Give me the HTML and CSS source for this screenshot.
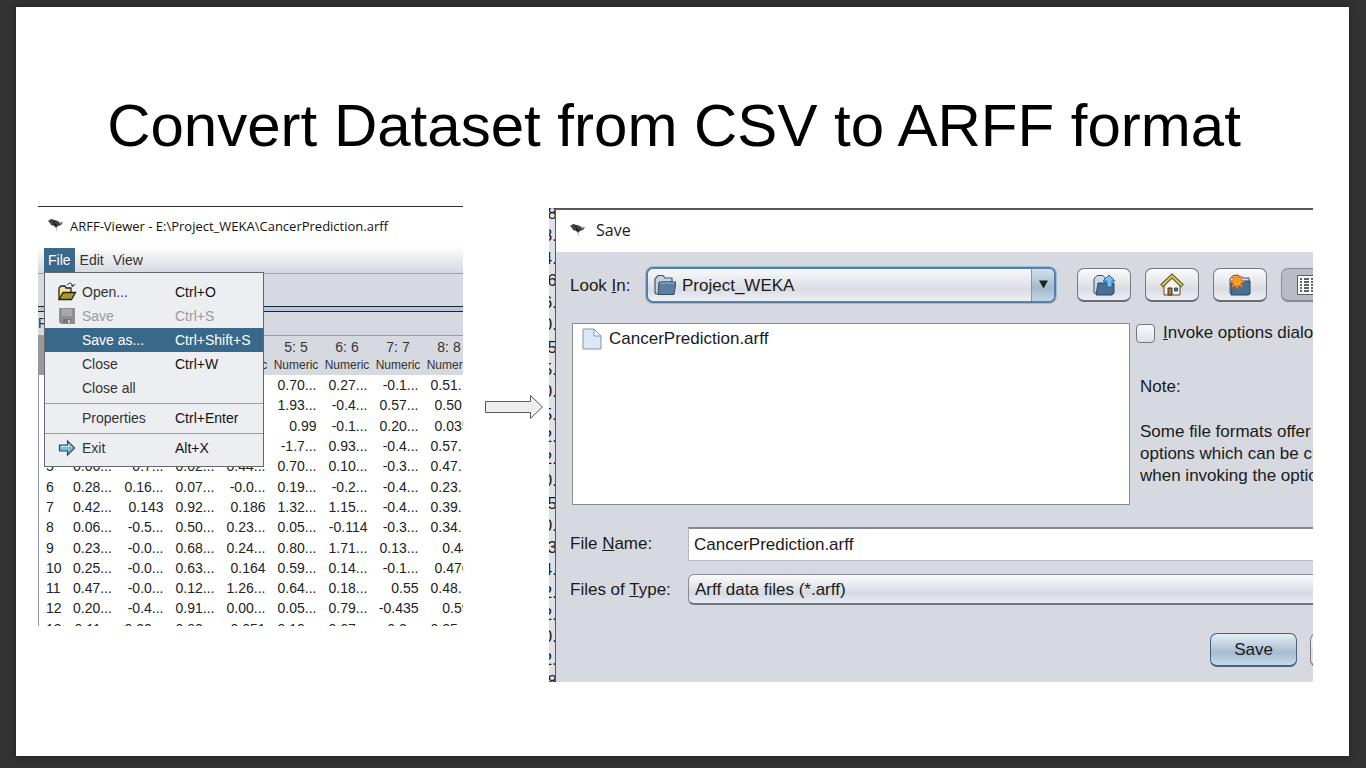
FILE: index.html
```html
<!DOCTYPE html>
<html lang="en">
<head>
<meta charset="utf-8">
<title>Convert Dataset from CSV to ARFF format</title>
<link rel="stylesheet" href="styles.css">
</head>
<body>
<main class="slide">
  <h1 class="slide-title">Convert Dataset from CSV to ARFF format</h1>
  <div class="figures">

    <section class="viewer">
      <header class="viewer-title">
        <svg class="bird" viewBox="0 0 20 15" aria-hidden="true"><path d="M2 3 5 1l4 1 3 1 2 2 3-1-2 3-3 1-2 2-2-2-3-1-1-2z" fill="#444"/><path d="M5 2 9 4 8 7 12 8z" fill="#111"/><path d="M13 4h4l-3 2z" fill="#999"/><path d="M10 10l1 3" fill="none" stroke="#bbb"/></svg>
        <span>ARFF-Viewer - E:\Project_WEKA\CancerPrediction.arff</span>
      </header>
      <nav class="menubar">
        <button class="menubar-item is-open" type="button">File</button>
        <button class="menubar-item" type="button">Edit</button>
        <button class="menubar-item" type="button">View</button>
        <ul class="menu">
          <li><button class="menu-item" type="button">
            <svg class="menu-icon" viewBox="0 0 20 20" aria-hidden="true"><path d="M2 17V6l2-2h4l1 2h5v4" fill="#f4e98c" stroke="#222" stroke-width="1.3"/><path d="M2 17.500 6 10.500h12.500l-4 7z" fill="#a89a20" stroke="#222" stroke-width="1.300"/><path d="M10 3c2-3 5-2 6 1m-2-1 2 1.500L18 2" fill="none" stroke="#222"/></svg>
            <span>Open...</span><kbd>Ctrl+O</kbd></button></li>
          <li><button class="menu-item" type="button" disabled>
            <svg class="menu-icon" viewBox="0 0 20 20" aria-hidden="true"><path d="M2 2h16v16H4l-2-2z" fill="#8f8f8f"/><path d="M5 3h10v7H5z" fill="#a9a9a9"/><path d="M6 13h8v4H6z" fill="#777"/><path d="M11 14h2v3h-2z" fill="#ccc"/></svg>
            <span>Save</span><kbd>Ctrl+S</kbd></button></li>
          <li><button class="menu-item is-active" type="button"><i></i><span>Save as...</span><kbd>Ctrl+Shift+S</kbd></button></li>
          <li><button class="menu-item" type="button"><i></i><span>Close</span><kbd>Ctrl+W</kbd></button></li>
          <li><button class="menu-item" type="button"><i></i><span>Close all</span></button></li>
          <li class="menu-line"></li>
          <li><button class="menu-item" type="button"><i></i><span>Properties</span><kbd>Ctrl+Enter</kbd></button></li>
          <li class="menu-line"></li>
          <li><button class="menu-item" type="button">
            <svg class="menu-icon" viewBox="0 0 20 20" aria-hidden="true"><path d="M2.500 7h8V3l7 7-7 7v-4h-8z" fill="#79bfd2" stroke="#2c4b58" stroke-width="1.200"/><path d="M4 8.500h8V6.500l3 3" fill="none" stroke="#c8ecf4"/></svg>
            <span>Exit</span><kbd>Alt+X</kbd></button></li>
        </ul>
      </nav>
      <div class="viewer-tabs"></div>
      <div class="viewer-split"></div>
      <div class="viewer-relation">R</div>
      <table class="data">
        <thead>
          <tr><th></th><th></th><th></th><th></th><th>&nbsp;<small>Numeric</small></th><th>5: 5<small>Numeric</small></th><th>6: 6<small>Numeric</small></th><th>7: 7<small>Numeric</small></th><th>8: 8<small>Numeric</small></th></tr>
        </thead>
        <tbody>
          <tr><td></td><td></td><td></td><td></td><td></td><td>0.70...</td><td>0.27...</td><td>-0.1...</td><td>0.51...</td></tr>
          <tr><td></td><td></td><td></td><td></td><td></td><td>1.93...</td><td>-0.4...</td><td>0.57...</td><td>0.501</td></tr>
          <tr><td></td><td></td><td></td><td></td><td></td><td>0.99</td><td>-0.1...</td><td>0.20...</td><td>0.035</td></tr>
          <tr><td></td><td></td><td></td><td></td><td></td><td>-1.7...</td><td>0.93...</td><td>-0.4...</td><td>0.57...</td></tr>
          <tr><td>5</td><td>0.06...</td><td>0.7...</td><td>0.02...</td><td>0.44...</td><td>0.70...</td><td>0.10...</td><td>-0.3...</td><td>0.47...</td></tr>
          <tr><td>6</td><td>0.28...</td><td>0.16...</td><td>0.07...</td><td>-0.0...</td><td>0.19...</td><td>-0.2...</td><td>-0.4...</td><td>0.23...</td></tr>
          <tr><td>7</td><td>0.42...</td><td>0.143</td><td>0.92...</td><td>0.186</td><td>1.32...</td><td>1.15...</td><td>-0.4...</td><td>0.39...</td></tr>
          <tr><td>8</td><td>0.06...</td><td>-0.5...</td><td>0.50...</td><td>0.23...</td><td>0.05...</td><td>-0.114</td><td>-0.3...</td><td>0.34...</td></tr>
          <tr><td>9</td><td>0.23...</td><td>-0.0...</td><td>0.68...</td><td>0.24...</td><td>0.80...</td><td>1.71...</td><td>0.13...</td><td>0.44</td></tr>
          <tr><td>10</td><td>0.25...</td><td>-0.0...</td><td>0.63...</td><td>0.164</td><td>0.59...</td><td>0.14...</td><td>-0.1...</td><td>0.476</td></tr>
          <tr><td>11</td><td>0.47...</td><td>-0.0...</td><td>0.12...</td><td>1.26...</td><td>0.64...</td><td>0.18...</td><td>0.55</td><td>0.48...</td></tr>
          <tr><td>12</td><td>0.20...</td><td>-0.4...</td><td>0.91...</td><td>0.00...</td><td>0.05...</td><td>0.79...</td><td>-0.435</td><td>0.59</td></tr>
          <tr><td>13</td><td>0.11...</td><td>0.20...</td><td>0.80...</td><td>0.051</td><td>0.10...</td><td>0.67...</td><td>0.2...</td><td>0.25...</td></tr>
        </tbody>
      </table>
    </section>

    <svg class="arrow" viewBox="0 0 58 26" aria-hidden="true"><path d="M.5 7.500h45v-6L57.500 13 45.500 24.500v-6H.5z" fill="#eee" stroke="#595959"/></svg>

    <section class="save">
      <div class="behind" aria-hidden="true">
        <span>8</span><span>8.</span><span>4.</span><span>6</span><span>6.</span><span>0.</span><span>5</span><span>5.</span><span>0.</span><span>5.</span><span>2.</span><span>2.</span><span>0.</span><span>5</span><span>0.</span><span>3</span><span>4.</span><span>2.</span><span>2.</span><span>0.</span><span>2.</span><span>8</span>
      </div>
      <div class="dialog">
        <header class="dialog-title">
          <svg class="bird" viewBox="0 0 20 15" aria-hidden="true"><path d="M2 3 5 1l4 1 3 1 2 2 3-1-2 3-3 1-2 2-2-2-3-1-1-2z" fill="#444"/><path d="M5 2 9 4 8 7 12 8z" fill="#111"/><path d="M13 4h4l-3 2z" fill="#999"/><path d="M10 10l1 3" fill="none" stroke="#bbb"/></svg>
          <span>Save</span>
        </header>
        <form class="dialog-body">
          <div class="look">
            <label for="look">Look <u>I</u>n:</label>
            <div class="combo">
              <select id="look"><option>Project_WEKA</option></select>
              <svg class="combo-icon" viewBox="0 0 22 22" aria-hidden="true"><path d="M1 19V5l3-3.500h5L11 4h7v4H8L5 20H2z" fill="#c5d3e0" stroke="#41566b" stroke-width="1.200"/><path d="M5 8h17l-2 12.500H4z" fill="#5d7f9e" stroke="#344d64"/><path d="M6 9h14" stroke="#9bb7cf"/></svg>
              <span class="combo-arrow"><svg viewBox="0 0 10 10" aria-hidden="true"><path d="M0 0h10L5 9z" fill="#1d2226"/></svg></span>
            </div>
            <div class="tools">
              <button type="button" aria-label="Up One Level"><svg viewBox="0 0 24 24"><path d="M2 20V6l3-3.500h6L13 5v15z" fill="#c9d9e8" stroke="#3d566d"/><path d="M4 22 6 10h16v10l-2 2z" fill="#4c6f91" stroke="#2f475f"/><path d="M17 2l6 6h-3v6h-5V8h-4z" fill="#79bff5" stroke="#2368a5"/></svg></button>
              <button type="button" aria-label="Home"><svg viewBox="0 0 24 24"><path d="M4 11v11h16V11l-8-7z" fill="#f6f3ea" stroke="#504a35"/><path d="M1.500 13 12 3l10.500 10" fill="none" stroke="#594f18" stroke-width="4"/><path d="M2 12.500 12 3l10 9.500" fill="none" stroke="#dfcb6a" stroke-width="1.800"/><path d="M8 15h4v7H8z" fill="#a77f35" stroke="#3e321c"/><path d="M14.500 15h3v3h-3z" fill="#527ac0" stroke="#34486b"/></svg></button>
              <button type="button" aria-label="Create New Folder"><svg viewBox="0 0 24 24"><path d="M2 20V6l3-3.500h6L13 5h8v5z" fill="#c9d9e8" stroke="#3d566d"/><path d="M3 22V8h19v13l-2 1z" fill="#4c6f91" stroke="#2f475f"/><path d="m9 1 1.500 4L14 3l-1.500 4 4 1.500-4 1.500L14 14l-3.500-2L9 16l-1.500-4L4 14l1.500-4-4-1.500 4-1.500L4 3l3.500 2z" fill="#ffa02b" stroke="#e6761b"/></svg></button>
              <button class="is-pressed" type="button" aria-label="List"><svg viewBox="0 0 24 24"><path d="M1.500 2.500h21v19h-21z" fill="#fff" stroke="#555f6b"/><path d="M4 6h2m2 0h5m2 0h5M4 9h2m2 0h5m2 0h5M4 12h2m2 0h5m2 0h5M4 15h2m2 0h5m2 0h5M4 18h2m2 0h5m2 0h5" stroke="#27313c" stroke-width="1.300"/></svg></button>
            </div>
          </div>
          <div class="browse">
            <ul class="files">
              <li><svg class="file-icon" viewBox="0 0 20 22" aria-hidden="true"><path d="M1 1h11l7 7v13H1z" fill="#dce8f4" stroke="#8496aa"/><path d="M12 1v7h7z" fill="#fff" stroke="#8496aa"/></svg>CancerPrediction.arff</li>
            </ul>
            <div class="side">
              <label class="check"><input type="checkbox"><span><u>I</u>nvoke options dialog</span></label>
              <p>Note:</p>
              <p>Some file formats offer additional<br>options which can be customized<br>when invoking the options dialog.</p>
            </div>
          </div>
          <div class="field">
            <label for="name">File <u>N</u>ame:</label>
            <input id="name" class="name" type="text" value="CancerPrediction.arff">
          </div>
          <div class="field">
            <label for="type">Files of <u>T</u>ype:</label>
            <select id="type" class="type"><option>Arff data files (*.arff)</option></select>
          </div>
          <div class="actions">
            <button class="primary" type="button">Save</button>
            <button type="button">Cancel</button>
          </div>
        </form>
      </div>
    </section>

  </div>
</main>
</body>
</html>
```
FILE: styles.css
```css
* { box-sizing: border-box; }

body {
  margin: 0;
  min-height: 100vh;
  display: flex;
  padding: 7px 17px 12px 16px;
  background: #333;
  color: #000;
  font-family: "Liberation Sans", Arial, sans-serif;
}

button, input, select, kbd { font: inherit; color: inherit; }
ul { list-style: none; margin: 0; padding: 0; }
p { margin: 0; }

.slide {
  flex: 1;
  min-width: 0;
  padding: 83px 36px 74px 22px;
  background: #fff;
  box-shadow: 0 0 6px #1c1c1c;
}

.slide-title {
  margin: 0 0 44px;
  padding-right: 3px;
  font-size: 60px;
  line-height: 72px;
  font-weight: 400;
  text-align: center;
}

.figures { display: flex; align-items: flex-start; }

.arrow {
  flex: none;
  width: 58px;
  height: 26px;
  margin: 188px 6px 0 22px;
}

.bird { flex: none; width: 20px; height: 15px; }

/* ARFF viewer window */
.viewer {
  flex: 425 1 0;
  min-width: 0;
  height: 420px;
  overflow: hidden;
  border-top: 1px solid #333;
  font-size: 14px;
  color: #333;
}

.viewer-title {
  display: flex;
  align-items: center;
  gap: 4px;
  height: 39px;
  padding: 0 0 2px 8px;
  font-family: "Open Sans", "Noto Sans", sans-serif;
  font-size: 13px;
  white-space: nowrap;
  color: #111;
}

.menubar {
  position: relative;
  display: flex;
  gap: 1px;
  height: 28px;
  padding: 2px 0 1px 6px;
  border-bottom: 1px solid #9da1a9;
  background: linear-gradient(#fff, #d5d8e0);
}

.menubar-item {
  padding: 0 4px;
  border: 0;
  background: none;
}

.menubar-item.is-open { background: #39698a; color: #fff; }

.menu {
  position: absolute;
  z-index: 1;
  top: 26px;
  left: 6px;
  width: 220px;
  padding: 7px 0 6px;
  border: 1px solid #66686c;
  background: #edeef2;
}

.menu-item {
  display: grid;
  grid-template-columns: 20px 88px 1fr;
  column-gap: 5px;
  align-items: center;
  width: 100%;
  height: 24px;
  padding: 0 0 0 12px;
  border: 0;
  background: none;
  text-align: left;
}

.menu-item kbd { color: #111; }
.menu-item:disabled, .menu-item:disabled kbd { color: #999; }
.menu-item.is-active, .menu-item.is-active kbd { color: #fff; }
.menu-item.is-active { background: #39698a; }
.menu-icon { width: 20px; height: 20px; }
.menu-line { height: 1px; margin: 3px 0 2px; background: #999ca3; }

.viewer-tabs { height: 32px; background: #d6d9e0; }

.viewer-split {
  height: 6px;
  border: solid #1b2430;
  border-width: 1px 0;
  background: #b3c8dc;
}

.viewer-relation {
  height: 24px;
  border-bottom: 1px solid #999ca3;
  background: #d6d9e0;
  line-height: 22px;
  overflow: hidden;
}

.data {
  width: 436px;
  height: 303px;
  table-layout: fixed;
  border-collapse: collapse;
  border-left: 1px solid #8d97ad;
  line-height: 16px;
}

.data th {
  width: 51px;
  height: 39px;
  padding: 3px 0 0;
  background: #d6d9e0;
  font-weight: 400;
}

.data th:first-child { width: 28px; background: #999; }
.data small { display: block; font-size: 12px; line-height: 20px; }
.data td { padding: 0 5px 0 0; text-align: right; color: #222; }
.data td:first-child { padding: 0 0 0 7px; text-align: left; }

/* Save dialog */
.save {
  flex: 764 1 0;
  min-width: 0;
  height: 474px;
  margin-top: 2px;
  display: flex;
  overflow: hidden;
  font-size: 17px;
  color: #1a1a1a;
}

.behind {
  flex: none;
  display: grid;
  grid-auto-rows: 1fr;
  justify-content: end;
  align-items: center;
  width: 6px;
  margin: -5px 0 -11px;
  background: #dfe1e6;
  line-height: 16px;
  text-align: right;
}

.behind span { margin-right: -2px; }

.dialog {
  position: relative;
  flex: 1;
  min-width: 0;
  display: flex;
  flex-direction: column;
  overflow: hidden;
  border: solid #55585d;
  border-width: 2px 0 0 1px;
  background: #d6d9e0;
}

.dialog-title {
  flex: none;
  display: flex;
  align-items: center;
  gap: 8px;
  height: 42px;
  padding: 0 0 2px 12px;
  background: #fff;
  font-family: "Open Sans", "Noto Sans", sans-serif;
  font-size: 16px;
}

.dialog-body {
  margin-right: -84px;
  padding: 15px 0 0 14px;
}

.look {
  display: flex;
  align-items: center;
  padding-right: 62px;
}

.look label { flex: none; width: 76px; padding-top: 2px; }

.combo { position: relative; flex: 1; }

.combo select {
  display: block;
  appearance: none;
  width: 100%;
  height: 36px;
  padding: 1px 36px 0 34px;
  border: 2px solid #587ea4;
  border-radius: 7px;
  background: linear-gradient(#f8f9fb, #d9dce2 65%, #eef2f8);
  box-shadow: 0 0 0 1px #9bbcdb;
}

.combo-icon {
  position: absolute;
  top: 7px;
  left: 8px;
  width: 22px;
  height: 22px;
  pointer-events: none;
}

.combo-arrow {
  position: absolute;
  top: 2px;
  right: 2px;
  bottom: 2px;
  display: grid;
  place-items: center;
  width: 23px;
  border-left: 1px solid #8197ab;
  border-radius: 0 5px 5px 0;
  background: linear-gradient(#d3e0ea, #a3bacd 60%, #c0d6e8);
  pointer-events: none;
}

.combo-arrow svg { width: 9px; height: 10px; }

.tools { display: flex; gap: 14px; margin-left: 21px; }

.tools button, .actions button {
  display: grid;
  place-items: center;
  width: 54px;
  height: 34px;
  padding: 0;
  border: 1px solid #74777e;
  border-bottom: 2px solid #696d75;
  border-radius: 7px;
  background: linear-gradient(#fbfbfc, #d9dce2 65%, #eceff5);
}

.tools .is-pressed { border-color: #888c94; background: #b9bcc4; }
.tools svg { width: 24px; height: 24px; }

.browse { display: flex; gap: 6px; margin-top: 20px; }

.files {
  flex: 1;
  height: 182px;
  margin-left: 2px;
  padding: 3px 9px;
  border: 1px solid #878b93;
  background: #fff;
}

.files li { display: flex; align-items: center; gap: 7px; height: 23px; }
.file-icon { width: 20px; height: 22px; }

.side { flex: none; width: 261px; line-height: 22px; white-space: nowrap; }
.side p { margin: 0 0 23px 4px; }
.check { display: flex; align-items: center; gap: 8px; height: 20px; margin-bottom: 33px; }

.check input {
  appearance: none;
  width: 19px;
  height: 19px;
  margin: 0;
  border: 1px solid #74777e;
  border-radius: 4px;
  background: linear-gradient(#fbfbfc, #dfe1e7);
}

.field { display: flex; align-items: center; margin-top: 17px; }
.field + .field { margin-top: 13px; }
.field label { flex: none; width: 118px; }

.name {
  flex: 1;
  min-width: 0;
  height: 34px;
  padding: 0 5px;
  border: 1px solid #b5b8be;
  border-top: 2px solid #85888f;
  background: #fff;
}

.type {
  appearance: none;
  flex: 1;
  min-width: 0;
  height: 31px;
  padding: 0 6px;
  border: 1px solid #888b92;
  border-bottom: 2px solid #70747c;
  border-radius: 6px;
  background: linear-gradient(#fbfbfc, #d6d9df 65%, #e8ecf5);
}

.actions { display: flex; justify-content: flex-end; gap: 13px; margin-top: 28px; }
.actions button { width: 87px; }
.actions .primary { border-color: #46627c; background: linear-gradient(#e6eef4, #a6bccf 60%, #c5dbed); }
```
